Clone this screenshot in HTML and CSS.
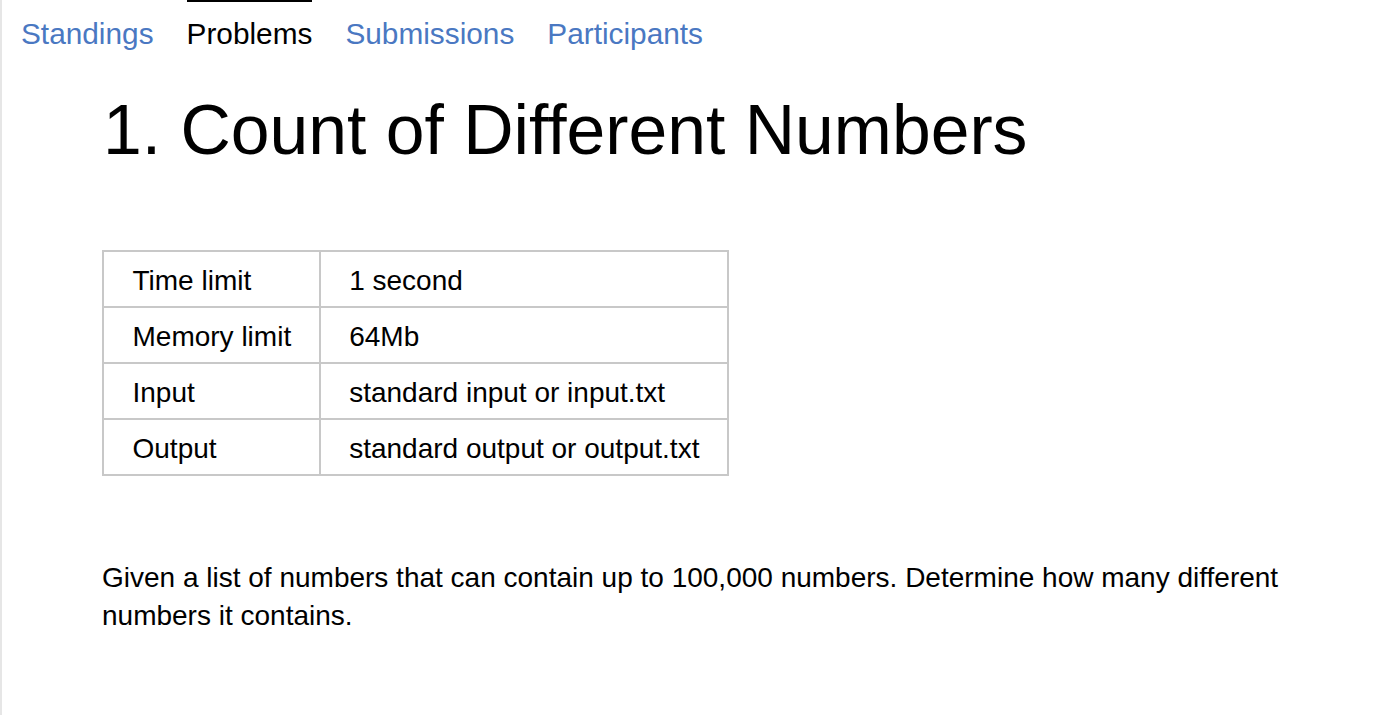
FILE: index.html
```html
<!DOCTYPE html>
<html lang="en">
<head>
<meta charset="utf-8">
<title>Count of Different Numbers</title>
<link rel="stylesheet" href="styles.css">
</head>
<body>
<nav class="tabs">
  <a class="tab" href="#">Standings</a>
  <a class="tab active" href="#">Problems</a>
  <a class="tab" href="#">Submissions</a>
  <a class="tab" href="#">Participants</a>
</nav>
<main class="problem">
  <h1 class="title">1. Count of Different Numbers</h1>
  <table class="limits">
    <tr><td>Time limit</td><td>1 second</td></tr>
    <tr><td>Memory limit</td><td>64Mb</td></tr>
    <tr><td>Input</td><td>standard input or input.txt</td></tr>
    <tr><td>Output</td><td>standard output or output.txt</td></tr>
  </table>
  <p class="statement">Given a list of numbers that can contain up to 100,000 numbers. Determine how many different numbers it contains.</p>
</main>
</body>
</html>
```
FILE: styles.css
```css
html, body {
  margin: 0;
  padding: 0;
  background: #fff;
}
body {
  border-left: 2px solid #e6e6e6;
  min-height: 715px;
  box-sizing: border-box;
  font-family: "Liberation Sans", Arial, sans-serif;
  color: #000;
}
.tabs {
  display: flex;
  gap: 33px;
  padding-left: 19px;
}
.tab {
  display: block;
  border-top: 2px solid transparent;
  padding-top: 15px;
  font-size: 29.8px;
  line-height: 34px;
  color: #4a78c2;
  text-decoration: none;
}
.tab.active {
  color: #000;
  border-top-color: #000;
}
.problem {
  padding: 0 100px 0 99px;
}
.title {
  margin: 39px 0 80px 2px;
  font-size: 69.7px;
  font-weight: normal;
  line-height: 80px;
}
.limits {
  margin-left: 1px;
  border-collapse: collapse;
  border: 2px solid #c8c8c8;
  font-size: 28px;
  line-height: 38px;
}
.limits td {
  border: 2px solid #c8c8c8;
  padding: 10px 27.5px 6px 28.5px;
}
.statement {
  margin: 83px 0 0 1px;
  font-size: 28px;
  line-height: 38px;
}
```
